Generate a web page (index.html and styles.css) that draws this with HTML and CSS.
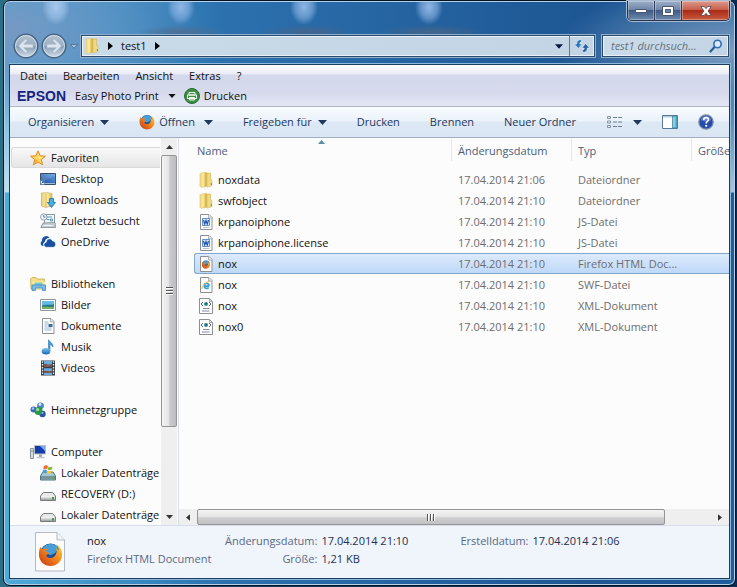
FILE: index.html
```
<!DOCTYPE html>
<html lang="de">
<head>
<meta charset="utf-8">
<meta name="viewport" content="width=device-width, initial-scale=1">
<title>test1</title>
<link rel="stylesheet" href="styles.css">
</head>
<body>
<svg class="defs" aria-hidden="true">
  <defs>
    <linearGradient id="gold" x1="0" x2="1" y1="0" y2="0"><stop offset="0" stop-color="#e9cf6e"/><stop offset=".5" stop-color="#fbf1b4"/><stop offset="1" stop-color="#dcbb52"/></linearGradient>
    <linearGradient id="sky" x1="0" x2="0" y1="0" y2="1"><stop offset="0" stop-color="#7cc4ee"/><stop offset="1" stop-color="#1668b8"/></linearGradient>
    <linearGradient id="screen" x1="0" x2="1" y1="1" y2="0"><stop offset="0" stop-color="#1c4796"/><stop offset="1" stop-color="#5ea0e8"/></linearGradient>
    <linearGradient id="fox" x1="1" x2="0" y1="0" y2="1"><stop offset="0" stop-color="#ffd42e"/><stop offset=".5" stop-color="#f0801c"/><stop offset="1" stop-color="#c43414"/></linearGradient>
    <linearGradient id="orb" x1="0" x2="0" y1="0" y2="1"><stop offset="0" stop-color="#b4c1cf"/><stop offset=".48" stop-color="#9db0c3"/><stop offset=".52" stop-color="#8a9fb5"/><stop offset="1" stop-color="#d3e0ec"/></linearGradient>
    <linearGradient id="metal" x1="0" x2="0" y1="0" y2="1"><stop offset="0" stop-color="#f5f5f5"/><stop offset="1" stop-color="#9a9d9f"/></linearGradient>
    <symbol id="folder" viewBox="0 0 16 16"><path d="M1.500 1.500 4 .8v14L1.500 15z" fill="#f0da80"/><path d="M3 1 8 .3v14.200L3 15.500z" fill="#f6e69c" stroke="#d9bd5c" stroke-width=".4"/><path d="M8 .8h4.500v7H8z" fill="#e3c667"/><path d="M6.500 1 9 .3v14L6.500 15.200z" fill="#d9ba55"/><path d="M9 1.500 12.500 1v6l1.500.6v6.200l-5 1.400z" fill="#efd980" stroke="#cdac4a" stroke-width=".4"/><path d="M12.800 11h1.200v2h-1.200z" fill="#57a79b"/></symbol>
    <symbol id="page" viewBox="0 0 16 16"><path d="M2.500.5h8.500l3 3v12H2.500z" fill="#fdfdfd" stroke="#8d9093"/><path d="M10.500.5v3.500H14" fill="#e2e4e6" stroke="#a3a6a9" stroke-width=".8"/></symbol>
    <symbol id="firefox" viewBox="0 0 16 16"><circle cx="8" cy="7.600" r="6.600" fill="#1f4f92"/><path d="M3 4C5 .8 10.500.2 13 3.500l-2 3.500-3 1.500L5 7z" fill="#4a9ed8"/><path d="M1.500 3.200 3 4.600c1-.5 2.300-.5 3.200.1-.8.5-1.100 1-1 1.600l1.800.6c-.2.9-1.500 1.200-1.700 1.900.5 1.500 3.200 2 4.900.7 1.700-1.300 2.200-3.800 1.300-5.700.8.400 1.300 1 1.700 1.700 0-1.600-.6-3-1.600-4 2.400 1.300 4 4 3.800 7C15.100 12.600 12 15.400 8 15.400S.7 12.300.6 8.300C.5 6.300.8 4.700 1.500 3.200z" fill="url(#fox)"/></symbol>
    <symbol id="word" viewBox="0 0 16 16"><use href="#page"/><path d="M4.500 4.500h7v7h-7z" fill="#dbe8fa" stroke="#4378c4" stroke-width=".8"/><path d="m5.500 6 1.200 4L8 6.500 9.300 10l1.200-4" fill="none" stroke="#2459ad" stroke-width="1.200"/><path d="M5 13.500h6.500" stroke="#bcc6d3"/></symbol>
    <symbol id="html" viewBox="0 0 16 16"><use href="#page"/><use href="#firefox" x="3.500" y="4" width="9" height="9"/></symbol>
    <symbol id="swf" viewBox="0 0 16 16"><use href="#page"/><path d="M11 9.200H6.500M10.700 10.500c-1 1.500-4.500 1.400-4.500-1.700 0-3.300 4.800-3.300 4.800.2" fill="none" stroke="#35a0dc" stroke-width="1.700"/><path d="M4 12c-.8-2 4.500-7.600 8-7.800" fill="none" stroke="#e9bd38" stroke-width="1"/></symbol>
    <symbol id="xml" viewBox="0 0 16 16"><path d="M1.500.5h10l3 3v12h-13z" fill="#fdfdfd" stroke="#8d9093"/><path d="M11.500.5v3h3" fill="none" stroke="#a3a6a9"/><path d="M5 4 3 6l2 2M11 4l2 2-2 2" fill="none" stroke="#586675" stroke-width="1"/><circle cx="8" cy="6" r="2" fill="#2c9990"/><circle cx="8.300" cy="5.700" r=".9" fill="#234d7e"/><path d="M5 10.500h6.500M4 13h7.500" stroke="#8290a2"/></symbol>
    <symbol id="star" viewBox="0 0 16 16"><path d="m8 .8 2.100 5 5.300.4-4.100 3.400 1.300 5.200L8 12l-4.600 2.800 1.300-5.200L.6 6.200l5.300-.4z" fill="#ffd75d" stroke="#e08726" stroke-linejoin="round"/><path d="m8 3 1.200 4L13 7.500 9 9z" fill="#fff0a0"/><path d="m4.500 13.500 1.300-4.300 2 1.500z" fill="#f5a02c"/></symbol>
    <symbol id="desktop" viewBox="0 0 16 16"><path d="M.5 2.500h15v11H.5z" fill="url(#screen)" stroke="#3b4f68"/><path d="M1 3h14v2L1 11z" fill="#fff" opacity=".14"/><path d="M1 12h14v1H1z" fill="#9cb9d8"/><path d="M.5 9.500h4v4h-4z" fill="#eaf4fd" stroke="#51779f" stroke-width=".6"/><path d="M1.500 12.500 3.700 10.300M2 10.300h1.800V12" stroke="#1769bb" fill="none"/></symbol>
    <symbol id="downloads" viewBox="0 0 16 16"><path d="M1.500 1 8 .7l4 1v12L6 15.500 1.500 14z" fill="url(#gold)" stroke="#c3a343" stroke-width=".6"/><path d="M6 2v13" stroke="#d3b453"/><path d="M9.500 6.500h4v4h2L11.500 15.500l-4-5h2z" fill="#48ade4" stroke="#1a6cab" stroke-width=".8"/></symbol>
    <symbol id="recent" viewBox="0 0 16 16"><path d="M4.500 1.500h10v9h-10z" fill="#f5f8fa" stroke="#8a969f"/><path d="M7 4h5M6.500 6.500h3M10.500 6h2v2h-2z" stroke="#5b9aba" fill="none"/><path d="m3 10 12-.5.5 5H.8z" fill="#c9ced1" stroke="#7b868e" stroke-width=".8"/><path d="M3.500 12.500h9" stroke="#eef1f3"/><circle cx="3.800" cy="4" r="3.200" fill="#edf5fa" stroke="#8799a5" stroke-width=".9"/><path d="M3.800 2v2.200h1.700" stroke="#4a6376" fill="none" stroke-width=".8"/></symbol>
    <symbol id="onedrive" viewBox="0 0 16 16"><path d="M3.500 12H2.800A2.700 2.700 0 0 1 2 7a4.200 4.200 0 0 1 7.600-3c-3.400-.2-4.500 1.800-4.600 3.600C3.500 8.400 2.800 10 3.500 12z" fill="#1850a3"/><path d="M6.500 13.300a2.500 2.500 0 0 1-.3-5c.1-4 5.300-4.600 6.300-1.400 3.900.1 4.200 5.800.8 6.400z" fill="#1850a3" stroke="#fff" stroke-width=".6"/></symbol>
    <symbol id="libraries" viewBox="0 0 16 16"><path d="M.6 3 2 1.500h4L7 3h7.500v10H1z" fill="#f4df86" stroke="#c4a84b" stroke-width=".8"/><path d="M2.500 5.500h12.800v8H3z" fill="#f9eaa4"/><path d="M4.500 6.500h8v5h-8z" fill="#79c8c7"/><path d="M2 9h13.500v5.500h-3V12H5.300v2.500H2z" fill="#78bde5" stroke="#4187b5" stroke-width=".8"/></symbol>
    <symbol id="pictures" viewBox="0 0 16 16"><path d="M.5 2.500h15v11H.5z" fill="#fff" stroke="#8e989f"/><path d="M2 4h12v8H2z" fill="#67bbe5"/><path d="M2 8.500c4-2 7 .5 12-1.500v5H2z" fill="#217985"/><path d="M2 10c4-1.500 8 .5 12-.5V12H2z" fill="#75ad69"/></symbol>
    <symbol id="documents" viewBox="0 0 16 16"><use href="#page"/><path d="M4.500 4h4M4.500 6h4M4.500 8h3M4.500 10h7M4.500 12h7" stroke="#8eacd0" stroke-width=".9"/><path d="M8.500 6h4v3h-4z" fill="#3b6d9c"/></symbol>
    <symbol id="music" viewBox="0 0 16 16"><path d="M8.500 11.500V.8c1 2.500 4.800 3 4.500 7.200-.8-1.500-1.800-2.200-3-2.500V12z" fill="#3d9edb" stroke="#2872b2" stroke-width=".6"/><ellipse cx="6" cy="12.200" rx="4.300" ry="3.200" fill="url(#sky)"/></symbol>
    <symbol id="videos" viewBox="0 0 16 16"><path d="M1 .5h14v15H1z" fill="#393d43"/><path d="M4 1h8v6H4zM4 8.300h8V15H4z" fill="#68ace0"/><path d="M4 4c3-1 3 2 8-.2V7H4zM4 11c3-1 5 1 8-.3V13H4z" fill="#80554c"/><path d="M2.500 1.300v14M13.500 1.300v14" stroke="#f1f1f1" stroke-width="1.300" stroke-dasharray="1.500 1.300"/></symbol>
    <symbol id="homegroup" viewBox="0 0 16 16"><circle cx="3.500" cy="7.500" r="3" fill="#3e65c5"/><circle cx="10.500" cy="3.800" r="3.400" fill="#4d82ca"/><circle cx="12.500" cy="12" r="3.200" fill="#2850a4"/><circle cx="8.500" cy="9" r="4" fill="#2b9548"/><circle cx="7.700" cy="7.500" r="1.600" fill="#98e393"/><circle cx="3" cy="6.500" r="1.200" fill="#a5c3f4"/><circle cx="10" cy="2.500" r="1.400" fill="#d5ecfb"/><circle cx="12.500" cy="11" r="1" fill="#8eb3ec"/></symbol>
    <symbol id="computer" viewBox="0 0 16 16"><path d="M.5 4.500h3v10h-3z" fill="#d7dce0" stroke="#747e87" stroke-width=".8"/><path d="M1.300 7h1.500" stroke="#35984e"/><path d="M4.500 1.500h11v8.500h-11z" fill="#163aab" stroke="#b6c0ca"/><path d="M10 2h5v5z" fill="#7aadf0"/><path d="M9 10.500h3V13H9z" fill="#9ba5ae"/><path d="M6.500 13.500h8" stroke="#c1c8ce" stroke-width="1.500"/></symbol>
    <symbol id="drive" viewBox="0 0 16 16"><path d="M3.500 6.500.5 10v4.500h15V10l-3-3.500z" fill="#e8e9ea" stroke="#777b7f"/><path d="M1 10.500h14v3.500H1z" fill="url(#metal)"/><path d="M12 11h2v2.500h-2z" fill="#449b3c"/></symbol>
    <symbol id="windrive" viewBox="0 0 16 16"><path d="m3 7-2.500 4v4h15v-4L13 7z" fill="#a5c8d5" stroke="#54717f"/><path d="M1 11h14v3.500H1z" fill="#79929e"/><path d="M12 11.800h2V14h-2z" fill="#57ae3f"/><path d="M4 1c1.500-1 2.800-.7 4 .1L7.200 4.300C6 3.600 4.600 3.600 3.200 4.300z" fill="#ef6b31"/><path d="M8.500 1.400c1.400.8 2.700.7 4 0l-.8 3.200c-1.500.8-2.800.6-4 0z" fill="#83ba39"/><path d="M3 5c1.400-.8 2.700-.7 4 .1L6.200 8.300c-1.400-.8-2.600-.7-4 .1z" fill="#42a0df"/><path d="M7.500 5.400c1.400.8 2.700.7 4 0l-.8 3.200c-1.400.7-2.700.6-4-.2z" fill="#f7ca3c"/></symbol>
    <symbol id="caret" viewBox="0 0 9 5"><path d="M0 0h9L4.500 5z" fill="currentColor"/></symbol>
    <symbol id="right" viewBox="0 0 5 8"><path d="M0 0v8l5-4z" fill="currentColor"/></symbol>
    <symbol id="back" viewBox="0 0 26 26"><circle cx="13" cy="13" r="11.800" fill="url(#orb)" stroke="#4a6684" stroke-width="1.500"/><circle cx="13" cy="13" r="10.500" fill="none" stroke="#d9e6f0" stroke-width=".8"/><path d="M12.500 6 5.500 13l7 7 1.700-1.700-3.500-3.500H20v-3.600h-9.300l3.500-3.500z" fill="#dce5ed" stroke="#a3b5c6" stroke-width=".5"/></symbol>
  </defs>
</svg>

<main class="window">
  <header class="titlebar">
    <div class="caption">
      <button class="cap" type="button" aria-label="Minimieren"><svg width="13" height="6" viewBox="0 0 13 6"><path d="M.5 1.500h11v3H.5z" fill="#fff" stroke="#4c5670"/></svg></button>
      <button class="cap" type="button" aria-label="Maximieren"><svg width="12" height="10" viewBox="0 0 12 10"><path d="M.5.5h11v9H.5z" fill="#fff" stroke="#4c5670"/><path d="M3.500 3.500h5v3h-5z" fill="#6d87a9" stroke="#4c5670"/></svg></button>
      <button class="cap cap-close" type="button" aria-label="Schließen"><svg width="12" height="10" viewBox="0 0 12 10"><path d="M.8.5h3.400L6 2.700 7.800.5h3.400L8 5l3.200 4.500H7.800L6 7.300 4.200 9.500H.8L4 5z" fill="#fff" stroke="#5c4654" stroke-width=".8"/></svg></button>
    </div>
    <div class="navrow">
      <button class="orb" type="button" aria-label="Zurück"><svg width="26" height="26"><use href="#back"/></svg></button>
      <button class="orb" type="button" aria-label="Vorwärts"><svg class="flip" width="26" height="26"><use href="#back"/></svg></button>
      <button class="recent" type="button" aria-label="Zuletzt besuchte Seiten"><svg width="8" height="5" viewBox="0 0 8 5"><path d="M.5.5h7L4 4.300z" fill="#a9bfd3" stroke="#4b6e94" stroke-width=".8"/></svg></button>
      <nav class="address" aria-label="Adresse">
        <svg width="16" height="16"><use href="#folder"/></svg>
        <svg class="crumb" width="5" height="8"><use href="#right"/></svg>
        <a class="place" href="#">test1</a>
        <svg class="crumb" width="5" height="8"><use href="#right"/></svg>
        <button class="history" type="button" aria-label="Vorherige Orte"><svg width="8" height="5"><use href="#caret"/></svg></button>
        <button class="refresh" type="button" aria-label="Aktualisieren"><svg width="16" height="14" viewBox="0 0 16 14"><path d="M7.500.8C4.500.3 2.600 2 2.600 5H.5L4.300 9.500 8.200 5H5.800c0-1.500.6-2 1.800-2z" fill="#2e78bf" stroke="#fff" stroke-width=".5"/><path d="M8.500 13.200c3 .5 4.900-1.200 4.900-4.200h2.100L11.700 4.500 7.800 9h2.400c0 1.500-.6 2-1.800 2z" fill="#2e60a8" stroke="#fff" stroke-width=".5"/></svg></button>
      </nav>
      <label class="search">
        <input type="search" placeholder="test1 durchsuch..." aria-label="test1 durchsuchen">
        <svg width="14" height="14" viewBox="0 0 14 14"><path d="m1.500 12.500 4-4.500" stroke="#2a5d98" stroke-width="2.200" stroke-linecap="round"/><circle cx="8.500" cy="5" r="3.700" fill="#dbeafa" stroke="#2f6cb0" stroke-width="1.600"/></svg>
      </label>
    </div>
  </header>

  <div class="client">
    <div class="menus">
      <nav class="menubar" aria-label="Menü">
        <button type="button">Datei</button><button type="button">Bearbeiten</button><button type="button">Ansicht</button><button type="button">Extras</button><button type="button">?</button>
      </nav>
      <div class="epson">
        <span class="brand">EPSON</span>
        <button class="photo" type="button">Easy Photo Print <svg width="8" height="4"><use href="#caret"/></svg></button>
        <button class="print" type="button"><svg width="16" height="16" viewBox="0 0 16 16"><circle cx="8" cy="8" r="7.500" fill="#3d8d45" stroke="#286b34"/><path d="M5 4.500h6V7H5zM3.500 7h9v3.500h-9zM5.500 9.500h5V12h-5z" fill="#3d8d45" stroke="#f5fff2"/></svg> Drucken</button>
      </div>
    </div>

    <div class="commands">
      <button type="button">Organisieren <svg width="9" height="5"><use href="#caret"/></svg></button>
      <button class="open" type="button"><svg width="16" height="16"><use href="#firefox"/></svg> Öffnen <svg class="later" width="9" height="5"><use href="#caret"/></svg></button>
      <button type="button">Freigeben für <svg width="9" height="5"><use href="#caret"/></svg></button>
      <button type="button">Drucken</button>
      <button type="button">Brennen</button>
      <button type="button">Neuer Ordner</button>
      <div class="tools">
        <button class="view" type="button" aria-label="Ansicht ändern"><svg width="16" height="14" viewBox="0 0 16 14"><path d="M.5 1.500h3v2h-3zM.5 6h3v2h-3zM.5 10.500h3v2h-3z" fill="#f5f9fd" stroke="#8293a5"/><path d="M6 2.500h4M11 2.500h4M6 7h4M11 7h4M6 11.500h4M11 11.500h4" stroke="#6c7f93"/></svg><svg width="9" height="5"><use href="#caret"/></svg></button>
        <button type="button" aria-label="Vorschaufenster"><svg width="16" height="14" viewBox="0 0 16 14"><path d="M.5.5h15v13H.5z" fill="#fff" stroke="#587a98"/><path d="M1 1h14v1.500H1z" fill="#b6cbdc"/><path d="M10.500 1h4.500v12h-4.500z" fill="#63b9d6" stroke="#397e9e" stroke-width=".7"/><path d="M12 2v10" stroke="#b5e1ee"/></svg></button>
        <button type="button" aria-label="Hilfe"><svg width="16" height="16" viewBox="0 0 16 16"><circle cx="8" cy="8" r="7.200" fill="#254cab" stroke="#8790a2" stroke-width="1.200"/><path d="M3 6a5 4 0 0 1 10 0c-3 2-7 2-10 0z" fill="#7799e3" opacity=".7"/><path d="M5.700 6c0-3.300 5-3.100 4.700-.2-.2 1.600-2.200 1.600-2.200 3.700" fill="none" stroke="#fff" stroke-width="1.600"/><circle cx="8.200" cy="11.800" r="1.100" fill="#fff"/></svg></button>
      </div>
    </div>

    <div class="body">
      <aside class="side">
        <nav class="tree" aria-label="Navigation">
          <a class="root active" href="#"><svg><use href="#star"/></svg>Favoriten</a>
          <a href="#"><svg><use href="#desktop"/></svg>Desktop</a>
          <a href="#"><svg><use href="#downloads"/></svg>Downloads</a>
          <a href="#"><svg><use href="#recent"/></svg>Zuletzt besucht</a>
          <a href="#"><svg><use href="#onedrive"/></svg>OneDrive</a>
          <a class="root spaced" href="#"><svg><use href="#libraries"/></svg>Bibliotheken</a>
          <a href="#"><svg><use href="#pictures"/></svg>Bilder</a>
          <a href="#"><svg><use href="#documents"/></svg>Dokumente</a>
          <a href="#"><svg><use href="#music"/></svg>Musik</a>
          <a href="#"><svg><use href="#videos"/></svg>Videos</a>
          <a class="root spaced" href="#"><svg><use href="#homegroup"/></svg>Heimnetzgruppe</a>
          <a class="root spaced" href="#"><svg><use href="#computer"/></svg>Computer</a>
          <a href="#"><svg><use href="#windrive"/></svg>Lokaler Datenträge</a>
          <a href="#"><svg><use href="#drive"/></svg>RECOVERY (D:)</a>
          <a href="#"><svg><use href="#drive"/></svg>Lokaler Datenträge</a>
        </nav>
        <div class="vscroll">
          <button type="button" aria-label="Nach oben"><svg class="up" width="7" height="4"><use href="#caret"/></svg></button>
          <div class="track"><div class="thumb"><i></i><i></i><i></i></div></div>
          <button type="button" aria-label="Nach unten"><svg width="7" height="4"><use href="#caret"/></svg></button>
        </div>
      </aside>

      <section class="content">
        <div class="files">
          <table>
            <colgroup><col><col class="c-date"><col class="c-type"><col class="c-size"></colgroup>
            <thead><tr><th class="sorted">Name <svg class="sort" width="7" height="4" viewBox="0 0 7 4"><path d="M3.500 0 7 4H0z" fill="#5b8fa8"/></svg></th><th>Änderungsdatum</th><th>Typ</th><th>Größe</th></tr></thead>
            <tbody>
              <tr><td><span class="file"><svg><use href="#folder"/></svg>noxdata</span></td><td>17.04.2014 21:06</td><td>Dateiordner</td><td></td></tr>
              <tr><td><span class="file"><svg><use href="#folder"/></svg>swfobject</span></td><td>17.04.2014 21:10</td><td>Dateiordner</td><td></td></tr>
              <tr><td><span class="file"><svg><use href="#word"/></svg>krpanoiphone</span></td><td>17.04.2014 21:10</td><td>JS-Datei</td><td></td></tr>
              <tr><td><span class="file"><svg><use href="#word"/></svg>krpanoiphone.license</span></td><td>17.04.2014 21:10</td><td>JS-Datei</td><td></td></tr>
              <tr class="selected"><td><span class="file"><svg><use href="#html"/></svg>nox</span></td><td>17.04.2014 21:10</td><td>Firefox HTML Doc...</td><td></td></tr>
              <tr><td><span class="file"><svg><use href="#swf"/></svg>nox</span></td><td>17.04.2014 21:10</td><td>SWF-Datei</td><td></td></tr>
              <tr><td><span class="file"><svg><use href="#xml"/></svg>nox</span></td><td>17.04.2014 21:10</td><td>XML-Dokument</td><td></td></tr>
              <tr><td><span class="file"><svg><use href="#xml"/></svg>nox0</span></td><td>17.04.2014 21:10</td><td>XML-Dokument</td><td></td></tr>
            </tbody>
          </table>
        </div>
        <div class="hscroll">
          <button type="button" aria-label="Nach links"><svg class="flip" width="4" height="7"><use href="#right"/></svg></button>
          <div class="track"><div class="thumb"><i></i><i></i><i></i></div></div>
          <button type="button" aria-label="Nach rechts"><svg width="4" height="7"><use href="#right"/></svg></button>
        </div>
      </section>
    </div>

    <footer class="details">
      <svg class="big" width="32" height="40" viewBox="0 0 32 40"><path d="M1.500.5H23l7.500 7.500v31h-29z" fill="#fcfcfd" stroke="#b5b9c0"/><path d="M23 .5V8h7.500" fill="#f1f3f6" stroke="#b5b9c0"/><use href="#firefox" x="4" y="10" width="25" height="25"/></svg>
      <div class="what"><strong>nox</strong><span>Firefox HTML Document</span></div>
      <dl><dt>Änderungsdatum:</dt><dd>17.04.2014 21:10</dd><dt>Größe:</dt><dd>1,21 KB</dd></dl>
      <dl><dt>Erstelldatum:</dt><dd>17.04.2014 21:06</dd></dl>
    </footer>
  </div>
</main>
</body>
</html>
```

FILE: styles.css
```
* { box-sizing: border-box; }

body {
  margin: 0;
  min-height: 100vh;
  display: flex;
  background: linear-gradient(90deg, #2b6f86, #0e3a5c 40%, #0a2c52);
  font: 11px/18px "Open Sans", "Noto Sans", sans-serif;
  color: #111;
}

.defs { position: absolute; width: 0; height: 0; }
svg { display: block; flex: none; }
.flip { transform: scaleX(-1); }
.up { transform: scaleY(-1); }

button {
  display: flex;
  align-items: center;
  padding: 0;
  border: 0;
  background: none;
  font: inherit;
  color: inherit;
  white-space: nowrap;
}
a { color: inherit; text-decoration: none; }

/* Glass frame */
.window {
  position: relative;
  flex: 1;
  min-width: 0;
  display: flex;
  flex-direction: column;
  margin: 0 1px 1px 3px;
  padding: 0 5px 6px 6px;
  border: 1px solid #06121f;
  border-radius: 7px;
  box-shadow: inset 0 0 0 1px #b3d2ea;
  background:
    radial-gradient(ellipse 14px 18px at 52px 6px, #a5c8ee, #a5c8ee90 60%, transparent),
    radial-gradient(ellipse 14px 18px at 177px 6px, #8fb7e6, #8fb7e690 60%, transparent),
    radial-gradient(ellipse 14px 18px at 300px 6px, #8fb7e6, #8fb7e690 60%, transparent),
    radial-gradient(ellipse 14px 18px at 425px 6px, #8fb7e6, #8fb7e690 60%, transparent),
    radial-gradient(ellipse 46px 7px at 178px 31px, #4d6f95, transparent),
    radial-gradient(ellipse 46px 7px at 303px 31px, #45658c, transparent),
    radial-gradient(ellipse 56px 7px at 428px 31px, #45658c, transparent),
    radial-gradient(ellipse 200px 100px at 0 30px, #7699c2, #6f96c4b0 40%, transparent),
    radial-gradient(ellipse 180px 70px at 100% 50px, #7e9dc0, transparent),
    linear-gradient(#ffffff00 60px, #ffffffa0 191px, #ffffff00 192px),
    linear-gradient(90deg, #4fabd9, #2c71ae 30%, #1d5693 80%, #1f5d9c);
}

.titlebar { padding: 34px 1px 7px 0; }

.caption {
  position: absolute;
  top: 0;
  right: 5px;
  display: flex;
  height: 20px;
  border: 1px solid #26334c;
  border-top: 0;
  border-radius: 0 0 5px 5px;
  box-shadow: 0 0 0 1px #a4b9d2;
  overflow: hidden;
}
.cap {
  justify-content: center;
  width: 27px;
  border-right: 1px solid #33415c;
  background: linear-gradient(#9daec8, #7187a9 45%, #3f5a84 50%, #6f89ae);
  box-shadow: inset 0 0 0 1px #ffffff50;
}
.cap-close {
  width: 47px;
  border-right: 0;
  background: linear-gradient(#dc9a8c, #c8604e 45%, #a82b18 50%, #c95a3e);
}

.navrow { display: flex; align-items: center; height: 22px; }
.orb { width: 28px; justify-content: center; }
.orb:first-child { margin-left: 2px; }
.recent { width: 12px; justify-content: center; margin-right: 1px; }

.address, .search {
  display: flex;
  align-items: center;
  height: 22px;
  border: 1px solid #2b4c70;
  box-shadow: 0 0 0 1px #8fb0cd, inset 0 0 0 1px #e9f1f7;
  background: linear-gradient(90deg, #c9dae8, #c3d5e5);
}
.address { flex: 1; padding-left: 2px; margin-right: 7px; }
.crumb { margin: 0 8px; color: #000; }
.history { margin-left: auto; padding: 0 6px; color: #0c1440; }
.refresh { width: 25px; align-self: stretch; justify-content: center; border-left: 1px solid #5e7a98; }

.search { width: 127px; padding: 0 5px 0 8px; }
.search input {
  flex: 1;
  min-width: 0;
  padding: 0;
  border: 0;
  outline: 0;
  background: none;
  font: inherit;
  font-style: italic;
}
.search input::placeholder { color: #66737f; opacity: 1; }

/* Client area */
.client {
  flex: 1;
  display: flex;
  flex-direction: column;
  min-width: 0;
  border: 1px solid #1b3d5f;
  border-left: 0;
  box-shadow: -1px 0 0 #1b3d5f, 0 0 0 1px #8db9da;
  background: #fcfcfc;
}

.menus {
  border-bottom: 1px solid #b1b5c3;
  background: linear-gradient(#fff, #e9ecf6 9px, #d3d8ea 10px, #d6daec 28px, #e3e6f3);
}
.menubar { display: flex; gap: 16px; height: 21px; padding: 1px 0 0 10px; }
.epson { display: flex; align-items: center; height: 20px; padding-left: 7px; }
.brand { font: bold 14px/20px "Liberation Sans", sans-serif; color: #16247f; }
.photo { margin-left: 9px; gap: 9px; }
.print { margin-left: 8px; gap: 4px; }

.commands {
  display: flex;
  align-items: center;
  gap: 30px;
  height: 31px;
  padding: 0 15px 0 18px;
  border-bottom: 1px solid #a0afc3;
  background: linear-gradient(#fafcfe, #eaf2fb 14px, #dde8f5 15px, #dbe6f4);
  color: #1e395b;
}
.commands button { gap: 6px; }
.commands .open { gap: 4px; }
.later { margin-left: 5px; }
.tools { display: flex; align-items: center; gap: 20px; margin-left: auto; }
.commands .view { gap: 10px; margin-left: -4px; }

.body { flex: 1; display: flex; min-height: 0; }

/* Navigation tree */
.side { display: flex; width: 169px; border-right: 1px solid #d6dfee; padding-right: 1px; }
.tree { flex: 1; min-width: 0; padding: 9px 1px 0; overflow: hidden; }
.tree a {
  display: flex;
  align-items: center;
  gap: 5px;
  height: 21px;
  padding-left: 29px;
  white-space: nowrap;
  overflow: hidden;
}
.tree svg, .file svg { width: 16px; height: 16px; }
.tree .root { padding-left: 19px; }
.tree .spaced { margin-top: 21px; }
.tree .active {
  padding-left: 18px;
  border: 1px solid #d9d9d9;
  border-right: 0;
  border-radius: 3px 0 0 3px;
  background: linear-gradient(#f9f9f9, #e5e5e5);
}

/* Scroll bars */
.vscroll, .hscroll { display: flex; background: #efefef; color: #333; }
.vscroll { flex-direction: column; width: 16px; }
.vscroll button { height: 17px; justify-content: center; }
.hscroll { height: 16px; }
.hscroll button { width: 18px; justify-content: center; }
.track { flex: 1; display: flex; }
.vscroll .track { flex-direction: column; }
.thumb { display: flex; align-items: center; justify-content: center; gap: 1px; border: 1px solid #959595; border-radius: 2px; }
.vscroll .thumb { flex-direction: column; height: 77%; background: linear-gradient(90deg, #f4f4f4, #e3e3e3 50%, #cbcbcd 55%, #bdbdc1); }
.hscroll .thumb { width: 91%; background: linear-gradient(#f4f4f4, #e3e3e3 50%, #cfcfd1 55%, #c1c1c5); }
.thumb i { background: #555; }
.vscroll i { width: 7px; height: 2px; border-bottom: 1px solid #fff; }
.hscroll i { width: 2px; height: 7px; border-right: 1px solid #fff; }

/* File list */
.content { flex: 1; display: flex; flex-direction: column; min-width: 0; }
.files { flex: 1; padding-left: 15px; overflow: hidden; }
table { width: 100%; table-layout: fixed; border-collapse: separate; border-spacing: 0; }
.c-date, .c-type { width: 120px; }
.c-size { width: 38px; }
th {
  position: relative;
  height: 31px;
  padding: 0 0 5px 7px;
  text-align: left;
  font-weight: normal;
  color: #4c607a;
  white-space: nowrap;
  overflow: hidden;
  background: linear-gradient(#e6ebf2, #dfe6ef) left top / 1px 23px no-repeat;
}
th.sorted { padding-left: 3px; background: none; }
.sort { position: absolute; top: 2px; left: 50%; margin-left: -5px; }
td { height: 21px; padding: 0 0 0 7px; color: #6d6d6d; white-space: nowrap; overflow: hidden; }
td:first-child { padding-left: 4px; color: #111; }
.file { display: flex; align-items: center; gap: 4px; }
.selected td {
  border: solid #84a6cd;
  border-width: 1px 0;
  background: linear-gradient(#dceafc, #bfd9f9);
  line-height: 16px;
}
.selected td:first-child { padding-left: 3px; border-left-width: 1px; border-radius: 3px 0 0 3px; }

/* Details pane */
.details {
  display: flex;
  height: 53px;
  padding: 6px 24px 0;
  border-top: 1px solid #d5deeb;
  background: #f0f4fb;
  color: #1e2f52;
}
.what { display: flex; flex-direction: column; width: 138px; margin-left: 21px; white-space: nowrap; }
.what strong { font-weight: normal; color: #111; }
.what span, dt { color: #5a6b85; }
dl { display: grid; grid-template-columns: auto auto; column-gap: 4px; align-content: start; margin: 0; white-space: nowrap; }
dl + dl { margin-left: 52px; }
dt { text-align: right; }
dd { margin: 0; }
```
